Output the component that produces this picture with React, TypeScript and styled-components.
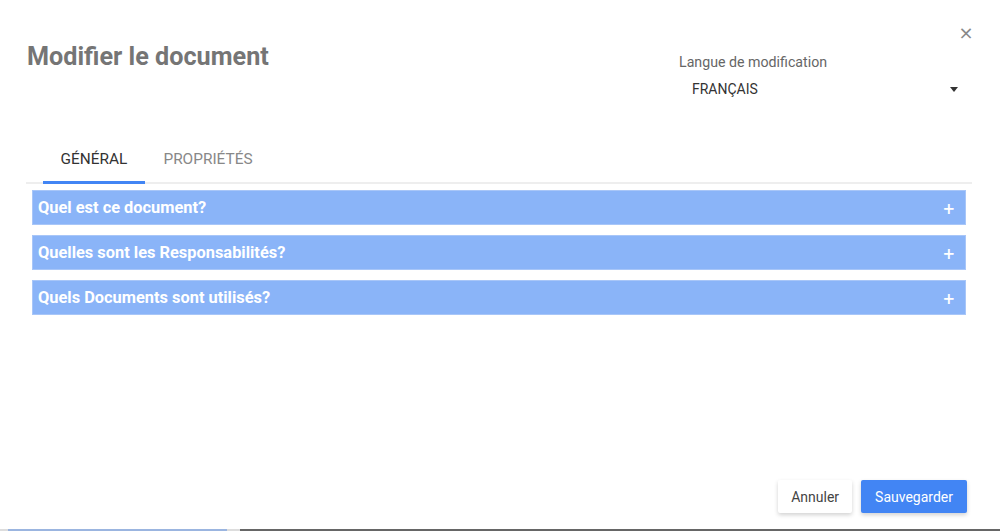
import React from "react";
import styled, { createGlobalStyle } from "styled-components";

const Global = createGlobalStyle`
  html, body { margin: 0; padding: 0; background: #fff; }
  body { font-family: Roboto, "Liberation Sans", Arial, sans-serif; }
  * { box-sizing: border-box; }
`;

const Page = styled.div`
  width: 1000px;
  height: 531px;
  position: relative;
  display: flex;
  flex-direction: column;
  overflow: hidden;
`;

const Dialog = styled.div`
  flex: 1;
  display: flex;
  flex-direction: column;
  padding: 0 28px 0 26px;
`;

const Header = styled.div`
  display: flex;
  justify-content: space-between;
  align-items: flex-start;
  height: 140px;
  padding-top: 41px;
`;

const Title = styled.h1`
  margin: 0 0 0 1px;
  font-size: 25.2px;
  font-weight: 700;
  color: #757575;
  line-height: 32px;
`;

const Close = styled.button`
  position: absolute;
  top: 23px;
  right: 26px;
  border: none;
  background: none;
  padding: 0;
  width: 16px;
  height: 20px;
  color: #888;
  font-size: 18px;
  line-height: 20px;
  font-family: "DejaVu Sans", sans-serif;
  cursor: pointer;
`;

const LangBlock = styled.div`
  width: 287px;
  margin-top: 13px;
  margin-right: 6px;
  display: flex;
  flex-direction: column;
`;

const LangLabel = styled.div`
  font-size: 14.2px;
  color: #666;
  line-height: 16px;
`;

const Select = styled.div`
  display: flex;
  justify-content: space-between;
  align-items: center;
  padding: 0 8px 0 13px;
  margin-top: 11px;
  height: 16px;
  font-size: 14px;
  color: #333;
`;

const Caret = styled.span`
  width: 0;
  height: 0;
  border-left: 4.5px solid transparent;
  border-right: 4.5px solid transparent;
  border-top: 5px solid #333;
`;

const Tabs = styled.div`
  display: flex;
  padding-left: 17px;
  border-bottom: 2px solid #eee;
  height: 44px;
`;

const Tab = styled.div<{ $active?: boolean }>`
  width: ${(p) => (p.$active ? "102px" : "126px")};
  display: flex;
  justify-content: center;
  align-items: center;
  padding-bottom: 3px;
  font-size: 15.4px;
  text-transform: uppercase;
  color: ${(p) => (p.$active ? "#333" : "#888")};
  border-bottom: 3px solid ${(p) => (p.$active ? "#4285f4" : "transparent")};
  margin-bottom: -2px;
`;

const Panels = styled.div`
  display: flex;
  flex-direction: column;
  gap: 10px;
  margin: 6px 6px 0 6px;
`;

const Row = styled.div`
  height: 35px;
  background: #8ab4f8;
  border: 1px solid #a8c6f8;
  display: flex;
  justify-content: space-between;
  align-items: center;
  padding: 0 10px 0 5px;
  color: #fff;
  font-weight: 700;
  font-size: 16.4px;
`;

const Plus = styled.span`
  font-size: 15px;
  font-weight: 700;
  font-family: "DejaVu Sans", sans-serif;
  line-height: 1;
  margin-top: 3px;
`;

const Footer = styled.div`
  margin-top: auto;
  display: flex;
  justify-content: flex-end;
  gap: 9px;
  padding: 0 5px 16px 0;
`;

const Button = styled.button<{ $primary?: boolean }>`
  height: 33px;
  padding: 0 ${(p) => (p.$primary ? "14px" : "13px")};
  border: none;
  border-radius: 2px;
  font-family: Roboto, sans-serif;
  font-size: 14px;
  background: ${(p) => (p.$primary ? "#4285f4" : "#fff")};
  color: ${(p) => (p.$primary ? "#fff" : "#444")};
  box-shadow: 0 2px 4px rgba(0, 0, 0, 0.18);
`;

const Strip = styled.div`
  height: 2px;
  display: flex;
  background: #666;
`;

const StripPart = styled.div<{ $w: number; $c: string }>`
  width: ${(p) => p.$w}px;
  background: ${(p) => p.$c};
`;

const rows = [
  "Quel est ce document?",
  "Quelles sont les Responsabilités?",
  "Quels Documents sont utilisés?",
];

export default function App() {
  return (
    <Page>
      <Global />
      <Close aria-label="Fermer">×</Close>
      <Dialog>
        <Header>
          <Title>Modifier le document</Title>
          <LangBlock>
            <LangLabel>Langue de modification</LangLabel>
            <Select>
              <span>FRANÇAIS</span>
              <Caret />
            </Select>
          </LangBlock>
        </Header>
        <Tabs>
          <Tab $active>Général</Tab>
          <Tab>Propriétés</Tab>
        </Tabs>
        <Panels>
          {rows.map((r) => (
            <Row key={r}>
              <span>{r}</span>
              <Plus>+</Plus>
            </Row>
          ))}
        </Panels>
        <Footer>
          <Button>Annuler</Button>
          <Button $primary>Sauvegarder</Button>
        </Footer>
      </Dialog>
      <Strip>
        <StripPart $w={8} $c="#ddd" />
        <StripPart $w={219} $c="#9bb5e0" />
        <StripPart $w={13} $c="#ddd" />
      </Strip>
    </Page>
  );
}
